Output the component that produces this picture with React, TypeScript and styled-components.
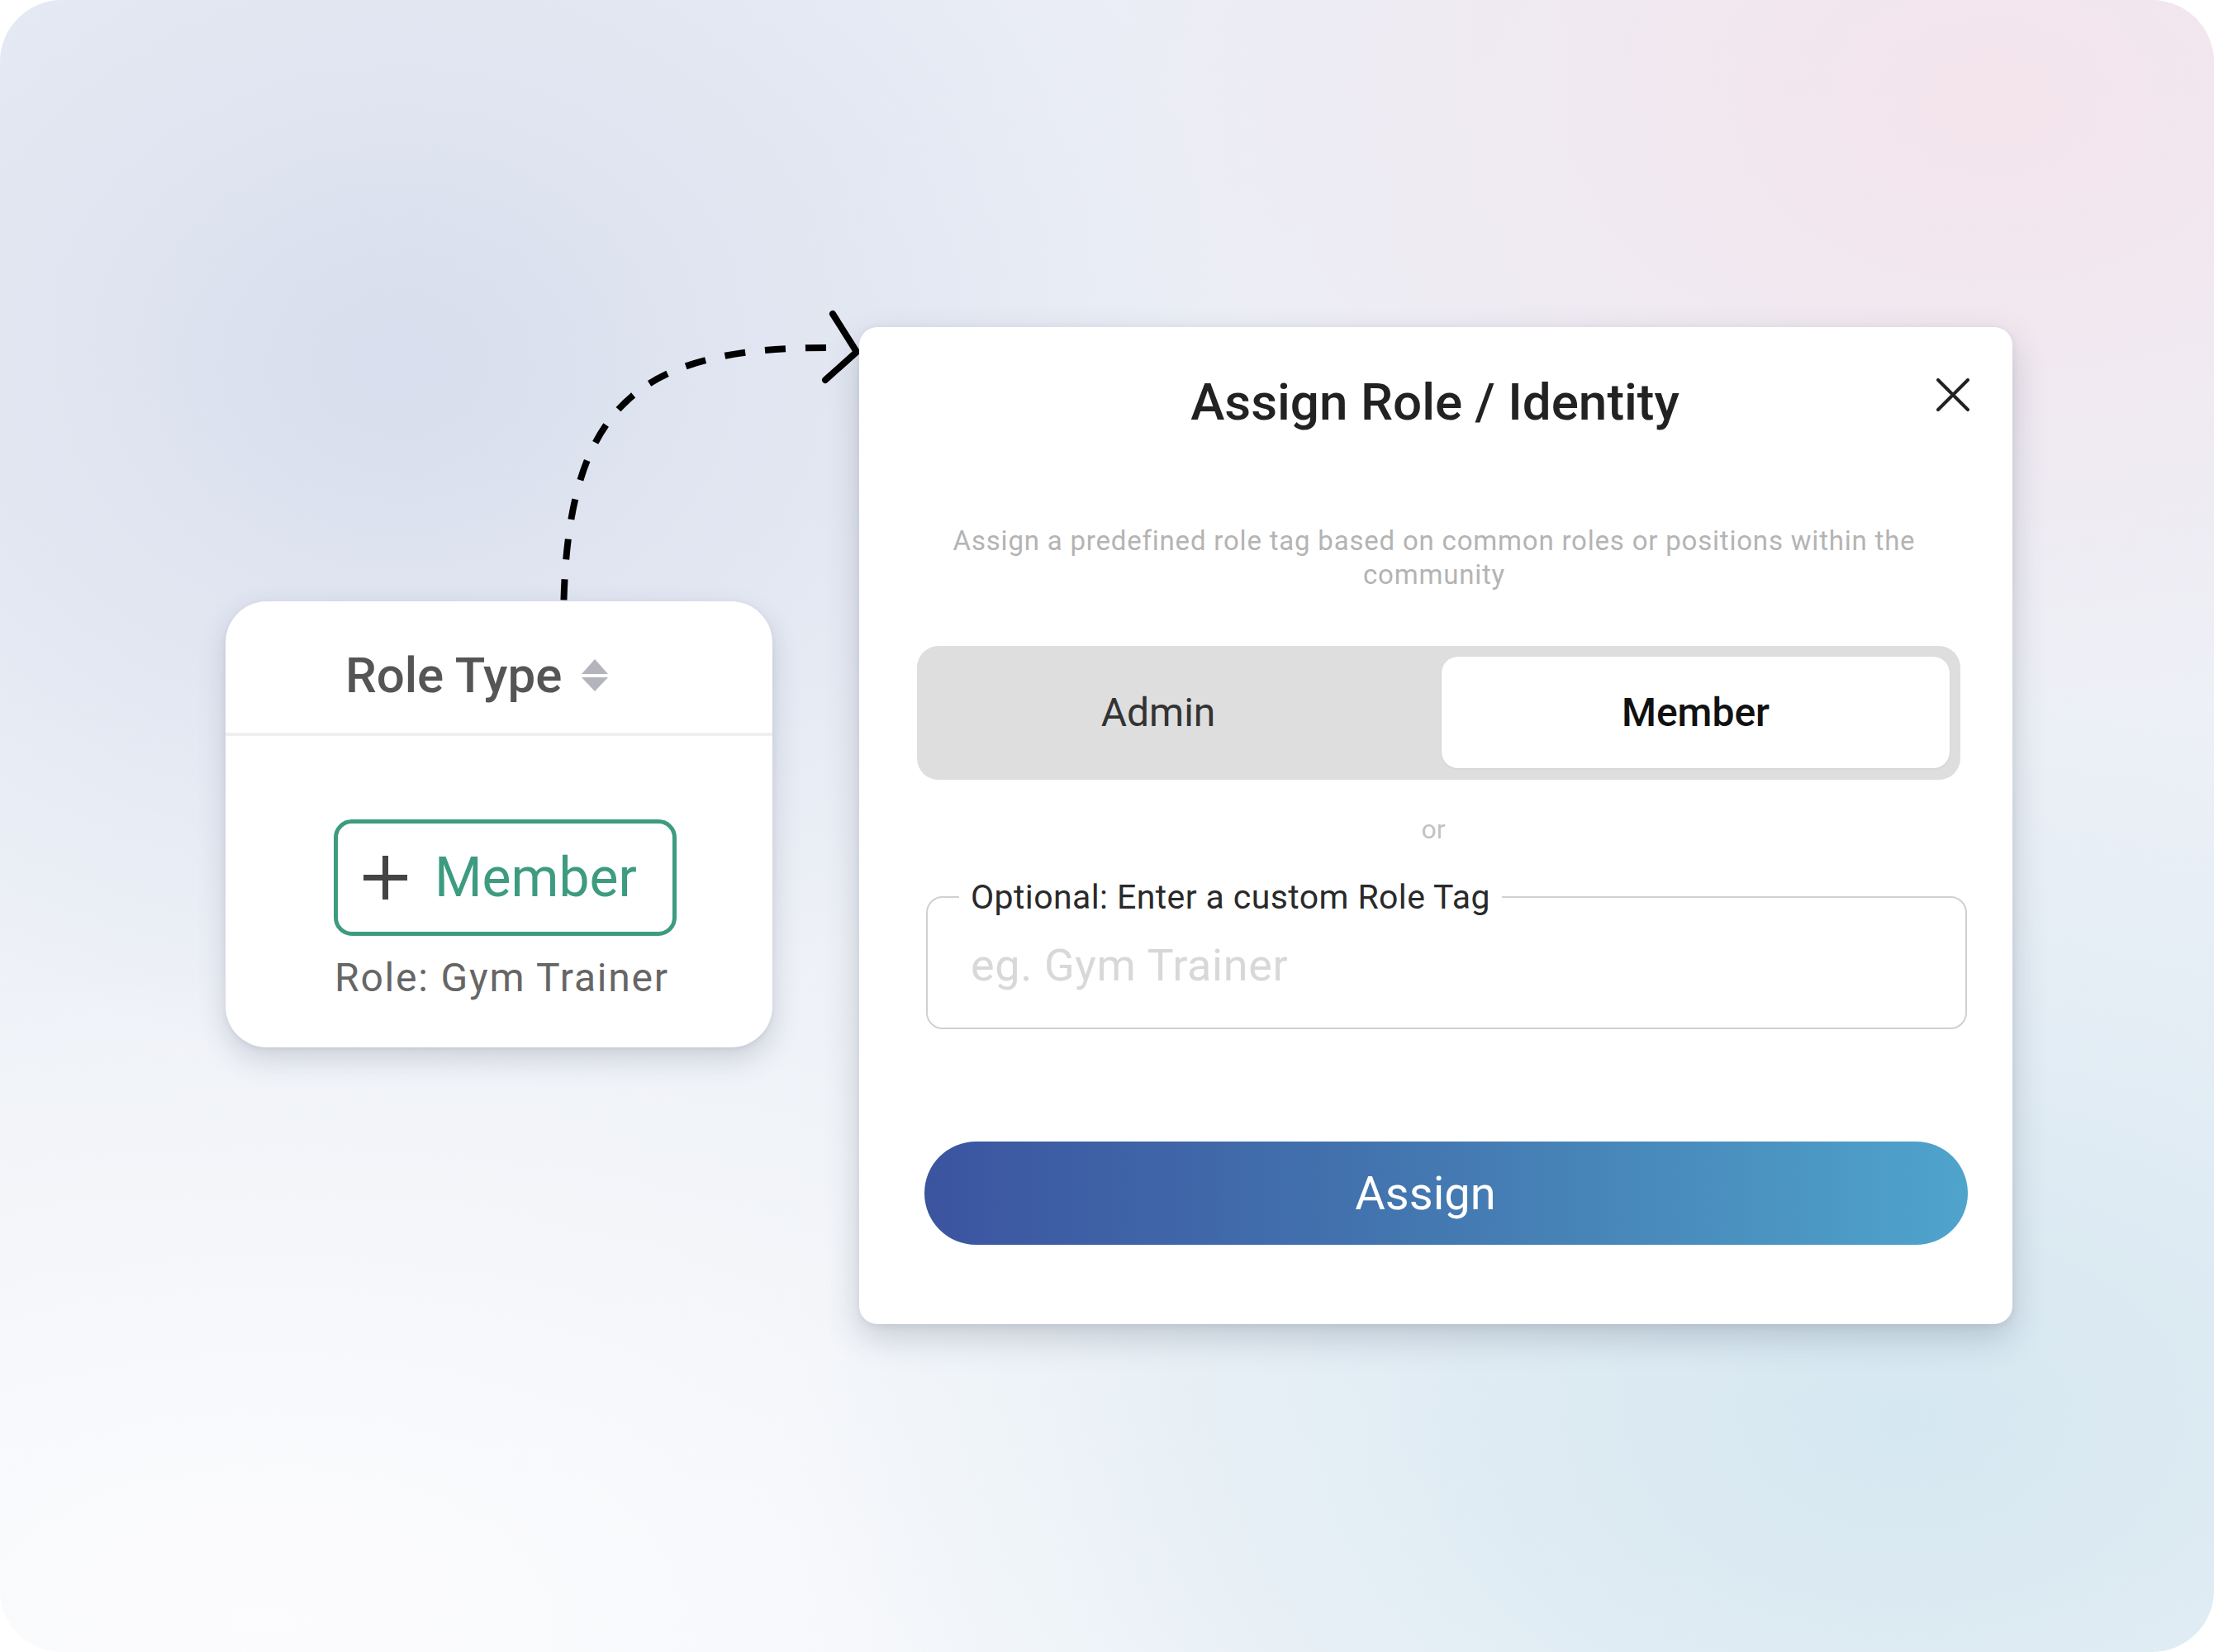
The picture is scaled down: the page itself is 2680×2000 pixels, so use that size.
import React from "react";
import styled, { createGlobalStyle } from "styled-components";

const GlobalStyle = createGlobalStyle`
  html, body { margin: 0; padding: 0; background: #ffffff; }
  body { font-family: Roboto, "Noto Sans", "Liberation Sans", sans-serif; }
  * { box-sizing: border-box; }
`;

const Frame = styled.div`
  position: relative;
  width: 2680px;
  height: 2000px;
  border-radius: 75px;
  overflow: hidden;
  display: flex;
  align-items: flex-start;
  padding: 396px 0 0 273px;
  column-gap: 105px;
  background:
    radial-gradient(ellipse 38% 42% at 18% 22%, rgba(216, 222, 237, 1) 0%, rgba(216, 222, 237, 0) 100%),
    radial-gradient(ellipse 40% 38% at 90% 6%, rgba(244, 228, 236, 1) 0%, rgba(244, 228, 236, 0) 100%),
    radial-gradient(ellipse 50% 45% at 86% 86%, rgba(213, 231, 241, 1) 0%, rgba(213, 231, 241, 0) 100%),
    radial-gradient(ellipse 55% 40% at 12% 98%, rgba(252, 252, 254, 1) 0%, rgba(252, 252, 254, 0) 100%),
    linear-gradient(180deg, #ebeef6 0%, #eef1f7 55%, #f1f4f8 100%);
`;

const ArrowLayer = styled.svg`
  position: absolute;
  left: 660px;
  top: 360px;
  width: 400px;
  height: 400px;
  z-index: 0;
  overflow: visible;
`;

/* ---------- Left card ---------- */

const RoleCard = styled.section`
  position: relative;
  z-index: 1;
  margin-top: 332px;
  width: 662px;
  height: 540px;
  background: #ffffff;
  border-radius: 50px;
  box-shadow: 0 14px 34px rgba(60, 70, 100, 0.2), 0 2px 6px rgba(60, 70, 100, 0.08);
  display: flex;
  flex-direction: column;
`;

const CardHeader = styled.div`
  display: flex;
  align-items: center;
  column-gap: 23px;
  padding: 54px 0 34px 145px;
  border-bottom: 4px solid #efefef;
`;

const HeaderLabel = styled.span`
  font-size: 60px;
  line-height: 71px;
  font-weight: 500;
  color: #555555;
`;

const CardBody = styled.div`
  display: flex;
  flex-direction: column;
  align-items: flex-start;
  padding: 101px 0 0 131px;
  row-gap: 22px;
`;

const TagButton = styled.button`
  width: 415px;
  height: 141px;
  border: 5px solid #3d9b80;
  border-radius: 22px;
  background: #ffffff;
  display: flex;
  align-items: center;
  column-gap: 33px;
  padding: 0 0 0 31px;
  font-family: Roboto, "Liberation Sans", sans-serif;
  cursor: pointer;
`;

const TagText = styled.span`
  font-size: 66px;
  line-height: 78px;
  font-weight: 400;
  color: #3d9b80;
`;

const RoleCaption = styled.span`
  margin-left: 1px;
  font-size: 48px;
  line-height: 57px;
  letter-spacing: 1.8px;
  color: #666666;
`;

/* ---------- Dialog ---------- */

const Dialog = styled.section`
  position: relative;
  z-index: 1;
  width: 1396px;
  height: 1207px;
  background: #ffffff;
  border-radius: 22px;
  box-shadow: 0 16px 40px rgba(50, 60, 80, 0.22), 0 2px 8px rgba(50, 60, 80, 0.08);
  display: flex;
  flex-direction: column;
  align-items: flex-start;
  padding: 54px 56px 94px 70px;
`;

const CloseButton = styled.button`
  position: absolute;
  top: 60px;
  right: 50px;
  width: 44px;
  height: 44px;
  padding: 0;
  border: none;
  background: transparent;
  cursor: pointer;
  display: flex;
  align-items: center;
  justify-content: center;
`;

const Title = styled.h2`
  align-self: stretch;
  margin: 0;
  padding-right: 16px;
  text-align: center;
  font-size: 62px;
  line-height: 74px;
  font-weight: 500;
  color: #222222;
`;

const Subtitle = styled.p`
  align-self: stretch;
  margin: 110px 0 0;
  padding: 0 44px 0 26px;
  text-align: center;
  font-size: 33px;
  line-height: 41px;
  letter-spacing: 0.8px;
  color: #b4b4b4;
`;

const Segmented = styled.div`
  margin-top: 66px;
  width: 1263px;
  height: 162px;
  padding: 13px 13px 14px;
  border-radius: 26px;
  background: #dedede;
  display: grid;
  grid-template-columns: 558px 615px;
  column-gap: 64px;
`;

const Segment = styled.button<{ $active?: boolean }>`
  border: none;
  border-radius: 20px;
  font-family: Roboto, "Liberation Sans", sans-serif;
  font-size: 48px;
  font-weight: ${(p) => (p.$active ? 500 : 400)};
  color: ${(p) => (p.$active ? "#111111" : "#333333")};
  background: ${(p) => (p.$active ? "#ffffff" : "transparent")};
  box-shadow: ${(p) => (p.$active ? "0 1px 3px rgba(0,0,0,0.06)" : "none")};
  cursor: pointer;
`;

const OrText = styled.span`
  align-self: stretch;
  margin-top: 41px;
  padding-right: 20px;
  text-align: center;
  font-size: 32px;
  line-height: 38px;
  color: #c2c2c2;
`;

const Field = styled.fieldset`
  margin: 39px 0 0 11px;
  width: 1260px;
  min-width: 0;
  padding: 0 38px 45px;
  border: 2px solid #d0d0d0;
  border-radius: 20px;
`;

const FieldLegend = styled.legend`
  padding: 0 14px;
  font-size: 41px;
  line-height: 48px;
  letter-spacing: 0.4px;
  color: #2a2a2a;
`;

const FieldInput = styled.input`
  display: block;
  width: 100%;
  height: 62px;
  margin-top: 27px;
  padding: 0 14px;
  border: none;
  outline: none;
  background: transparent;
  font-family: Roboto, "Liberation Sans", sans-serif;
  font-size: 54px;
  letter-spacing: 0.6px;
  color: #333333;
  &::placeholder {
    color: #d8d8d8;
  }
`;

const AssignButton = styled.button`
  margin: 136px 0 0 9px;
  width: 1263px;
  height: 125px;
  padding: 0 50px 0 0;
  border: none;
  border-radius: 63px;
  background: linear-gradient(90deg, #3b54a0 0%, #4479b1 50%, #4fa4cc 100%);
  color: #ffffff;
  font-family: Roboto, "Liberation Sans", sans-serif;
  font-size: 56px;
  font-weight: 400;
  cursor: pointer;
`;

const SortIcon = () => (
  <svg width="34" height="41" viewBox="0 0 34 41" aria-hidden="true">
    <polygon points="1,19 17,1 33,19" fill="#b4b4bc" />
    <polygon points="1,23 33,23 17,40" fill="#b4b4bc" />
  </svg>
);

const PlusIcon = () => (
  <svg width="53" height="53" viewBox="0 0 53 53" aria-hidden="true">
    <rect x="0" y="23" width="53" height="7" fill="#444444" />
    <rect x="23" y="0" width="7" height="53" fill="#444444" />
  </svg>
);

const CloseIcon = () => (
  <svg width="40" height="40" viewBox="0 0 40 40" aria-hidden="true">
    <path d="M2 2 L38 38 M38 2 L2 38" stroke="#222222" strokeWidth="4" strokeLinecap="round" />
  </svg>
);

export default function App() {
  return (
    <>
      <GlobalStyle />
      <Frame>
        <ArrowLayer viewBox="660 360 400 400" aria-hidden="true">
          <path
            d="M1000 421 C 760 421, 682 500, 682 760"
            fill="none"
            stroke="#000000"
            strokeWidth="8"
            strokeDasharray="25 24"
          />
          <path
            d="M1008 380 L1037 426 L999 460"
            fill="none"
            stroke="#000000"
            strokeWidth="8"
            strokeLinecap="round"
            strokeLinejoin="miter"
          />
        </ArrowLayer>

        <RoleCard>
          <CardHeader>
            <HeaderLabel>Role Type</HeaderLabel>
            <SortIcon />
          </CardHeader>
          <CardBody>
            <TagButton type="button">
              <PlusIcon />
              <TagText>Member</TagText>
            </TagButton>
            <RoleCaption>Role: Gym Trainer</RoleCaption>
          </CardBody>
        </RoleCard>

        <Dialog>
          <CloseButton type="button" aria-label="Close">
            <CloseIcon />
          </CloseButton>
          <Title>Assign Role / Identity</Title>
          <Subtitle>
            Assign a predefined role tag based on common roles or positions within the community
          </Subtitle>
          <Segmented>
            <Segment type="button">Admin</Segment>
            <Segment type="button" $active>
              Member
            </Segment>
          </Segmented>
          <OrText>or</OrText>
          <Field>
            <FieldLegend>Optional: Enter a custom Role Tag</FieldLegend>
            <FieldInput placeholder="eg. Gym Trainer" />
          </Field>
          <AssignButton type="button">Assign</AssignButton>
        </Dialog>
      </Frame>
    </>
  );
}
